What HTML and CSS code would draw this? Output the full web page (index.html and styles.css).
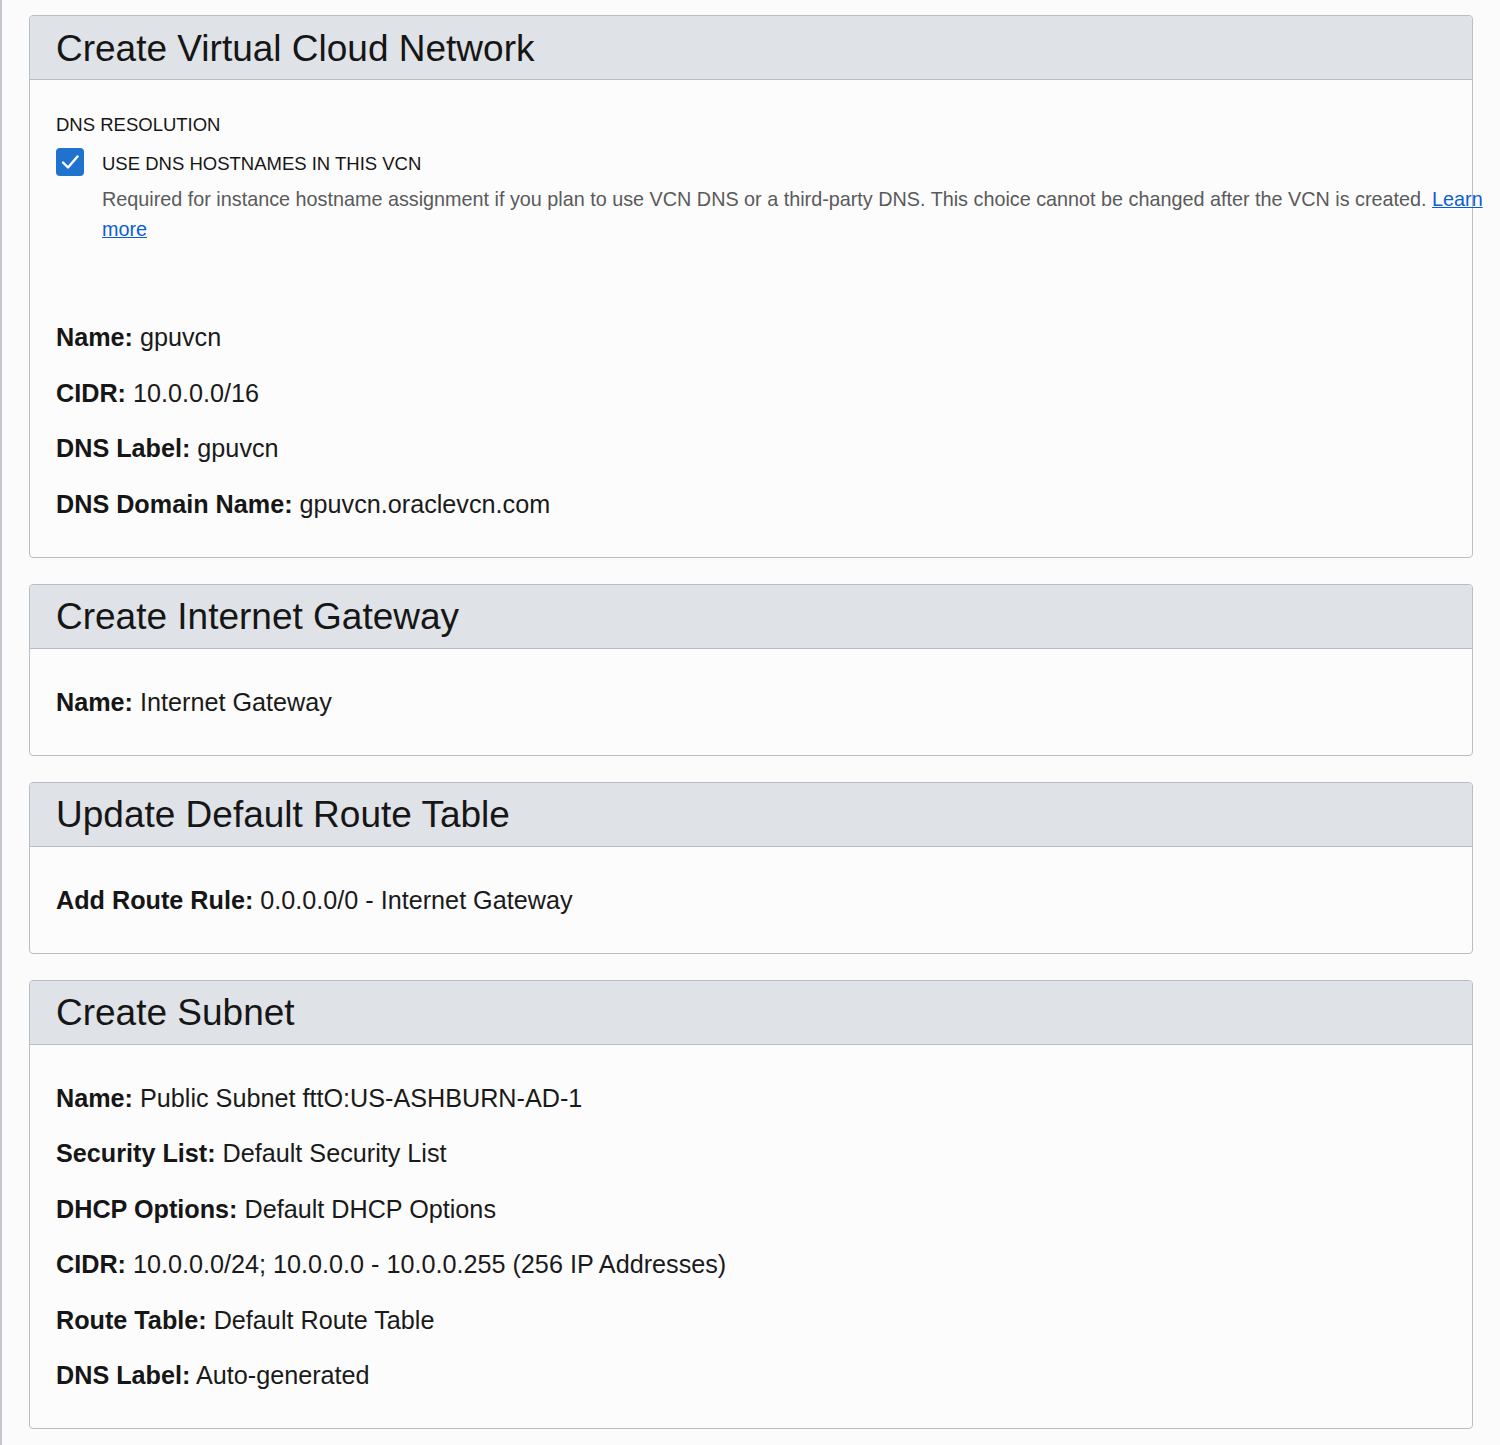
FILE: index.html
```html
<!DOCTYPE html>
<html lang="en">
<head>
<meta charset="utf-8">
<title>Create Virtual Cloud Network</title>
<link rel="stylesheet" href="styles.css">
</head>
<body>
<div class="page">
  <section class="panel">
    <header class="panel-head"><h2>Create Virtual Cloud Network</h2></header>
    <div class="panel-body">
      <div class="dns">
        <div class="dns-title">DNS RESOLUTION</div>
        <div class="check-row">
          <span class="checkbox"><svg viewBox="0 0 28 28" width="28" height="28"><path d="M7 14.5 L12 19.5 L21.5 8.5" fill="none" stroke="#fff" stroke-width="2.4" stroke-linecap="round" stroke-linejoin="round"/></svg></span>
          <span class="check-label">USE DNS HOSTNAMES IN THIS VCN</span>
        </div>
        <p class="check-desc">Required for instance hostname assignment if you plan to use VCN DNS or a third-party DNS. This choice cannot be changed after the VCN is created. <a href="#">Learn more</a></p>
      </div>
      <div class="rows first-rows">
        <div class="row"><b>Name:</b> gpuvcn</div>
        <div class="row"><b>CIDR:</b> 10.0.0.0/16</div>
        <div class="row"><b>DNS Label:</b> gpuvcn</div>
        <div class="row"><b>DNS Domain Name:</b> gpuvcn.oraclevcn.com</div>
      </div>
    </div>
  </section>

  <section class="panel">
    <header class="panel-head"><h2>Create Internet Gateway</h2></header>
    <div class="panel-body">
      <div class="rows">
        <div class="row"><b>Name:</b> Internet Gateway</div>
      </div>
    </div>
  </section>

  <section class="panel">
    <header class="panel-head"><h2>Update Default Route Table</h2></header>
    <div class="panel-body">
      <div class="rows">
        <div class="row"><b>Add Route Rule:</b> 0.0.0.0/0 - Internet Gateway</div>
      </div>
    </div>
  </section>

  <section class="panel">
    <header class="panel-head"><h2>Create Subnet</h2></header>
    <div class="panel-body">
      <div class="rows">
        <div class="row"><b>Name:</b> Public Subnet fttO:US-ASHBURN-AD-1</div>
        <div class="row"><b>Security List:</b> Default Security List</div>
        <div class="row"><b>DHCP Options:</b> Default DHCP Options</div>
        <div class="row"><b>CIDR:</b> 10.0.0.0/24; 10.0.0.0 - 10.0.0.255 (256 IP Addresses)</div>
        <div class="row"><b>Route Table:</b> Default Route Table</div>
        <div class="row"><b>DNS Label:</b> Auto-generated</div>
      </div>
    </div>
  </section>
</div>
</body>
</html>
```

FILE: styles.css
```css
html, body {
  margin: 0;
  padding: 0;
  background: #fbfbfb;
}
body {
  font-family: "Liberation Sans", Arial, Helvetica, sans-serif;
  color: #161616;
  min-height: 1445px;
  border-left: 2px solid #c4c8ce;
  box-sizing: border-box;
}
.page {
  padding: 15px 0 0 27px;
  width: 1444px;
  display: flex;
  flex-direction: column;
  gap: 26px;
}
.panel {
  border: 1px solid #b9bec5;
  border-radius: 4px;
  background: #fcfcfc;
}
.panel-head {
  background: #dfe2e6;
  border-bottom: 1px solid #b9bec5;
  border-radius: 4px 4px 0 0;
  height: 63px;
  display: flex;
  align-items: center;
  padding: 0 26px;
}
.panel-head h2 {
  margin: 0;
  font-size: 37px;
  font-weight: 400;
  color: #161616;
  line-height: 40px;
  padding-top: 2px;
}
.panel-body {
  padding: 35px 26px 35px;
}
.dns-title {
  font-size: 18.5px;
  line-height: 20px;
  color: #161616;
}
.check-row {
  display: flex;
  align-items: flex-start;
  gap: 18px;
  margin-top: 13px;
  height: 28px;
}
.checkbox {
  width: 28px;
  height: 28px;
  border-radius: 4px;
  background: #1f73cf;
  display: flex;
  flex: none;
}
.check-label {
  font-size: 18.5px;
  line-height: 25px;
  padding-top: 3px;
  color: #161616;
}
.check-desc {
  margin: 8px 0 0 46px;
  width: 1400px;
  font-size: 19.8px;
  line-height: 30px;
  color: #5a5a5a;
}
.check-desc a {
  color: #0a5ed4;
  text-decoration: underline;
}
.first-rows {
  margin-top: 75px;
}
.rows {
  display: flex;
  flex-direction: column;
  gap: 19.5px;
}
.row {
  font-size: 25.2px;
  line-height: 36px;
  color: #1a1a1a;
}
.row b {
  font-weight: 700;
  color: #161616;
}
```
